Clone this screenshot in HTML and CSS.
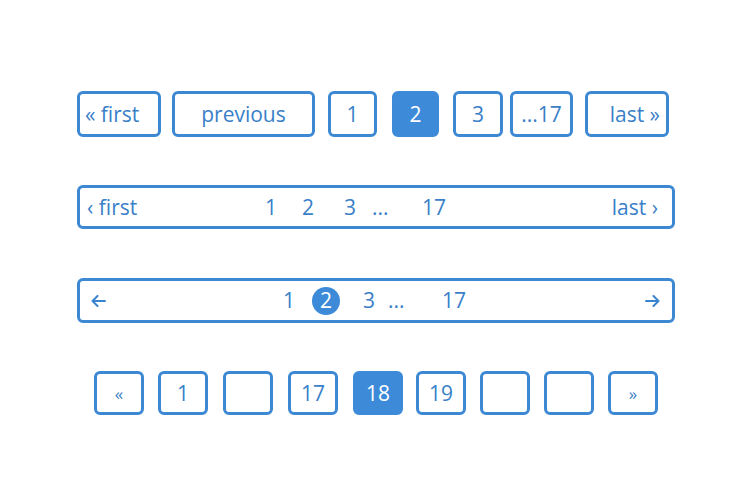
FILE: index.html
```html
<!DOCTYPE html>
<html>
<head>
<meta charset="utf-8">
<link rel="stylesheet" href="styles.css">
</head>
<body>
<main class="page">
  <nav class="row row-boxes">
    <a class="btn w-first">« first</a>
    <a class="btn w-prev">previous</a>
    <a class="btn w-1">1</a>
    <a class="btn w-2 active">2</a>
    <a class="btn w-3">3</a>
    <a class="btn w-17">...17</a>
    <a class="btn w-last">last »</a>
  </nav>

  <nav class="row bar bar-text">
    <span class="bt-first">‹ first</span>
    <span class="bt-n1">1</span>
    <span class="bt-n2">2</span>
    <span class="bt-n3">3</span>
    <span class="bt-dots">...</span>
    <span class="bt-n17">17</span>
    <span class="bt-last">last ›</span>
  </nav>

  <nav class="row bar bar-arrows">
    <span class="arrow">
      <svg width="15" height="12" viewBox="0 0 15 12"><path d="M14 6H1.5M6.5 1L1.5 6l5 5" fill="none" stroke="#3a84cf" stroke-width="2" stroke-linecap="round" stroke-linejoin="round"/></svg>
    </span>
    <span class="ba-n1">1</span>
    <span class="ba-circle">2</span>
    <span class="ba-n3">3</span>
    <span class="ba-dots">...</span>
    <span class="ba-n17">17</span>
    <span class="arrow arrow-right">
      <svg width="15" height="12" viewBox="0 0 15 12"><path d="M1 6h12.5M8.5 1l5 5-5 5" fill="none" stroke="#3a84cf" stroke-width="2" stroke-linecap="round" stroke-linejoin="round"/></svg>
    </span>
  </nav>

  <nav class="row row-squares">
    <a class="sq small">«</a>
    <a class="sq">1</a>
    <a class="sq shift"></a>
    <a class="sq shift">17</a>
    <a class="sq shift active">18</a>
    <a class="sq back">19</a>
    <a class="sq"></a>
    <a class="sq"></a>
    <a class="sq small">»</a>
  </nav>
</main>
</body>
</html>
```

FILE: styles.css
```css
html, body {
  margin: 0;
  padding: 0;
  background: #ffffff;
}

body {
  width: 748px;
  height: 500px;
  font-family: "Open Sans", "Noto Sans", sans-serif;
  color: #3a7fc8;
  font-size: 21px;
}

.page {
  padding-top: 91px;
  display: flex;
  flex-direction: column;
}

.row {
  display: flex;
  align-items: center;
  box-sizing: border-box;
}

/* Row 1 */
.row-boxes {
  margin-left: 77px;
  height: 46px;
}

.btn {
  box-sizing: border-box;
  height: 46px;
  border: 3px solid #3d88d3;
  border-radius: 6px;
  display: flex;
  align-items: center;
  justify-content: center;
  line-height: 1;
}

.btn.active {
  background: #3d8bd8;
  border-color: #3d8bd8;
  color: #ffffff;
}

.w-first { width: 84px; justify-content: flex-start; padding-left: 5px; }
.w-prev { width: 143px; margin-left: 11px; }
.w-1 { width: 49px; margin-left: 13px; }
.w-2 { width: 47px; margin-left: 15px; }
.w-3 { width: 50px; margin-left: 14px; }
.w-17 { width: 63px; margin-left: 7px; }
.w-last { width: 84px; margin-left: 12px; justify-content: flex-end; padding-right: 6px; }

/* Bars */
.bar {
  margin-left: 77px;
  width: 598px;
  border: 3px solid #3d88d3;
  border-radius: 6px;
  line-height: 1;
}

.bar-text {
  margin-top: 48px;
  height: 44px;
  padding-left: 7px;
  padding-right: 14px;
}

.bt-first { width: 178px; }
.bt-n1 { width: 37px; }
.bt-n2 { width: 42px; }
.bt-n3 { width: 28px; }
.bt-dots { width: 50px; }
.bt-last { margin-left: auto; }

.bar-arrows {
  margin-top: 49px;
  height: 45px;
  padding-left: 11px;
  padding-right: 12px;
}

.arrow {
  display: flex;
  align-items: center;
  width: 192px;
}

.arrow-right {
  width: auto;
  margin-left: auto;
}

.ba-n1 { width: 29px; }
.ba-circle {
  width: 28px;
  height: 28px;
  border-radius: 50%;
  background: #3d8bd8;
  color: #ffffff;
  display: flex;
  align-items: center;
  justify-content: center;
  margin-right: 23px;
}
.ba-n3 { width: 25px; }
.ba-dots { width: 54px; }

/* Row 4 */
.row-squares {
  margin-top: 48px;
  margin-left: 94px;
  gap: 14px;
}

.sq {
  box-sizing: border-box;
  width: 50px;
  height: 44px;
  border: 3px solid #3d88d3;
  border-radius: 6px;
  display: flex;
  align-items: center;
  justify-content: center;
  line-height: 1;
}

.sq.shift {
  margin-left: 1px;
}

.sq.back {
  margin-left: -1px;
}

.sq.small {
  font-size: 17px;
}

.sq.active {
  background: #3d8bd8;
  border-color: #3d8bd8;
  color: #ffffff;
}
```
